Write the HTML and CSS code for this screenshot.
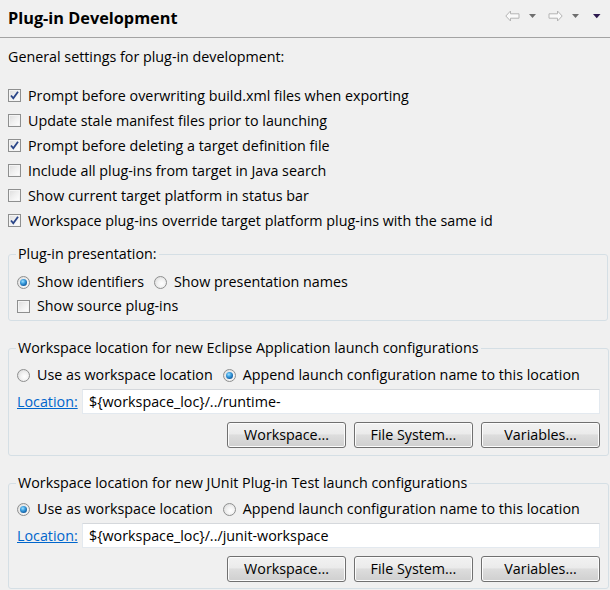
FILE: index.html
```html
<!DOCTYPE html>
<html>
<head>
<meta charset="utf-8">
<link rel="stylesheet" href="styles.css">
</head>
<body>
<div class="page">
  <header class="header">
    <h1 class="title">Plug-in Development</h1>
    <div class="nav">
      <svg class="arrow" width="15" height="12" viewBox="0 0 15 12"><path d="M0.8 6 L5.5 1 L5.5 3.8 L14 3.8 L14 8.2 L5.5 8.2 L5.5 11 Z" fill="#fafafa" stroke="#b4b4b4" stroke-width="1" stroke-linejoin="round"/></svg>
      <svg class="drop" width="8" height="5" viewBox="0 0 8 5"><path d="M0 0 H7 L3.5 4 Z" fill="#6e6e6e"/></svg>
      <svg class="arrow fwd" width="15" height="12" viewBox="0 0 15 12"><path d="M14.2 6 L9.5 1 L9.5 3.8 L1 3.8 L1 8.2 L9.5 8.2 L9.5 11 Z" fill="#fafafa" stroke="#b4b4b4" stroke-width="1" stroke-linejoin="round"/></svg>
      <svg class="drop" width="8" height="5" viewBox="0 0 8 5"><path d="M0 0 H7 L3.5 4 Z" fill="#6e6e6e"/></svg>
      <svg class="drop menu" width="8" height="5" viewBox="0 0 8 5"><path d="M0 0 H7.5 L3.75 4.2 Z" fill="#2d1a4f"/></svg>
    </div>
  </header>

  <p class="desc">General settings for plug-in development:</p>

  <div class="checks">
    <label class="row"><span class="cb checked"><svg viewBox="0 0 11 11" width="11" height="11"><path d="M2 5.5 L4.3 8.3 L9 1.8" fill="none" stroke="#2a4588" stroke-width="1.8"/></svg></span>Prompt before overwriting build.xml files when exporting</label>
    <label class="row"><span class="cb"></span>Update stale manifest files prior to launching</label>
    <label class="row"><span class="cb checked"><svg viewBox="0 0 11 11" width="11" height="11"><path d="M2 5.5 L4.3 8.3 L9 1.8" fill="none" stroke="#2a4588" stroke-width="1.8"/></svg></span>Prompt before deleting a target definition file</label>
    <label class="row"><span class="cb"></span>Include all plug-ins from target in Java search</label>
    <label class="row"><span class="cb"></span>Show current target platform in status bar</label>
    <label class="row"><span class="cb checked"><svg viewBox="0 0 11 11" width="11" height="11"><path d="M2 5.5 L4.3 8.3 L9 1.8" fill="none" stroke="#2a4588" stroke-width="1.8"/></svg></span>Workspace plug-ins override target platform plug-ins with the same id</label>
  </div>

  <fieldset class="group g1">
    <legend>Plug-in presentation:</legend>
    <div class="radios">
      <label class="opt"><span class="rb on"></span>Show identifiers</label>
      <label class="opt"><span class="rb"></span>Show presentation names</label>
    </div>
    <label class="row sub"><span class="cb"></span>Show source plug-ins</label>
  </fieldset>

  <fieldset class="group g2">
    <legend>Workspace location for new Eclipse Application launch configurations</legend>
    <div class="radios">
      <label class="opt"><span class="rb"></span>Use as workspace location</label>
      <label class="opt"><span class="rb on"></span>Append launch configuration name to this location</label>
    </div>
    <div class="loc">
      <a class="link" href="#">Location:</a>
      <div class="field">${workspace_loc}/../runtime-</div>
    </div>
    <div class="buttons">
      <button class="btn">Workspace...</button>
      <button class="btn">File System...</button>
      <button class="btn">Variables...</button>
    </div>
  </fieldset>

  <fieldset class="group g3">
    <legend>Workspace location for new JUnit Plug-in Test launch configurations</legend>
    <div class="radios">
      <label class="opt"><span class="rb on"></span>Use as workspace location</label>
      <label class="opt"><span class="rb"></span>Append launch configuration name to this location</label>
    </div>
    <div class="loc">
      <a class="link" href="#">Location:</a>
      <div class="field">${workspace_loc}/../junit-workspace</div>
    </div>
    <div class="buttons">
      <button class="btn">Workspace...</button>
      <button class="btn">File System...</button>
      <button class="btn">Variables...</button>
    </div>
  </fieldset>
</div>
</body>
</html>
```

FILE: styles.css
```css
html, body {
  margin: 0;
  padding: 0;
  background: #f0f0f0;
}
body {
  font-family: "Open Sans", "Noto Sans", sans-serif;
  font-size: 14.3px;
  line-height: 16px;
  color: #000;
  width: 610px;
  height: 590px;
  overflow: hidden;
}
.page {
  display: flex;
  flex-direction: column;
}
.header {
  height: 37px;
  display: flex;
  align-items: center;
  justify-content: space-between;
  padding: 0 8px;
  border-bottom: 1px solid #a3a3a3;
}
.title {
  margin: 0;
  font-size: 16.3px;
  font-weight: 700;
  line-height: 20px;
  margin-top: -1px;
}
.nav {
  display: flex;
  align-items: center;
  margin-top: -6px;
  margin-right: 1px;
}
.arrow { display: block; }
.drop { display: block; margin-left: 9px; margin-top: 1px; }
.arrow.fwd { margin-left: 11px; }
.drop.menu { margin-left: 13px; }

.desc {
  margin: 11px 0 0 8px;
}
.checks {
  margin-top: 18px;
  padding-left: 8px;
  display: flex;
  flex-direction: column;
}
.row {
  height: 25px;
  display: flex;
  align-items: center;
  gap: 7px;
}
.cb {
  width: 11px;
  height: 11px;
  border: 1px solid #8e8f8f;
  background: linear-gradient(135deg, #dcdcdc 0%, #f0f0f0 50%, #ffffff 100%);
  box-shadow: inset 0 0 0 1px #f4f4f4;
  display: flex;
  align-items: center;
  justify-content: center;
  flex: none;
}
.cb svg { display: block; }

.group {
  margin: 0 2px 0 8px;
  border: 1px solid #d5dfe5;
  border-radius: 3px;
  padding: 0 8px 0 8px;
  min-width: 0;
}
.group legend {
  padding: 0 2px;
  margin-left: -1px;
  line-height: 16px;
}
.g1 { margin-top: 13px; padding-top: 8px; padding-bottom: 2px; }
.g2 { margin-top: 19px; padding-top: 0; padding-bottom: 7px; margin-right: 1px; }
.g3 { margin-top: 19px; padding-top: 0; padding-bottom: 6px; margin-right: 1px; }
.g2 .radios { margin-top: 7px; }
.g3 .radios { margin-top: 6px; }

.radios {
  display: flex;
  gap: 10px;
  height: 24px;
  align-items: center;
}
.opt {
  display: flex;
  align-items: center;
  gap: 7px;
}
.g1 .row.sub { height: 24px; }
.rb {
  width: 11px;
  height: 11px;
  border: 1px solid #8e8f8f;
  border-radius: 50%;
  background: radial-gradient(circle at 60% 60%, #ffffff 0%, #f2f2f2 40%, #d4d4d4 100%);
  position: relative;
  flex: none;
}
.rb.on::after {
  content: "";
  position: absolute;
  left: 2px;
  top: 2px;
  width: 7px;
  height: 7px;
  border-radius: 50%;
  background: radial-gradient(circle at 40% 35%, #9fe0ff 0%, #3fa1e0 35%, #1463a8 70%, #0b3d73 100%);
}

.loc {
  display: grid;
  grid-template-columns: 65px 1fr;
  align-items: center;
  margin-top: 2px;
}
.link {
  color: #0066cc;
  text-decoration: underline;
}
.field {
  height: 23px;
  line-height: 23px;
  background: #fff;
  border: 1px solid #e3e9ef;
  border-top-color: #d5d8dc;
  padding: 0 6px;
}
.buttons {
  display: flex;
  justify-content: flex-end;
  gap: 8px;
  margin-top: 8px;
}
.btn {
  width: 119px;
  height: 26px;
  font: inherit;
  color: #000;
  border: 1px solid #707070;
  border-radius: 3px;
  background: linear-gradient(#f2f2f2 0%, #ebebeb 45%, #dddddd 50%, #cfcfcf 100%);
  box-shadow: inset 0 0 0 1px #fcfcfc;
  padding: 0;
}
```
